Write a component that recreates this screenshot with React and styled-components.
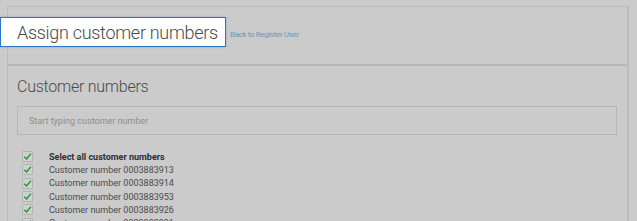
import React from "react";
import styled, { createGlobalStyle } from "styled-components";

const Global = createGlobalStyle`
    html, body {
        margin: 0;
        padding: 0;
        background: #cbcbcb;
        font-family: Roboto, "Liberation Sans", sans-serif;
        color: #454545;
        overflow: hidden;
    }
`

const Page = styled.div`
    width: 637px;
    height: 221px;
    padding: 6px 8px 0 7px;
    box-sizing: border-box;
`

const Frame = styled.div`
    border-left: 1px solid #bcbcbc;
    border-right: 2px solid #bcbcbc;
    height: 100%;
`

const Header = styled.div`
    height: 60px;
    border-top: 1px solid #bdbdbd;
    border-bottom: 2px solid #b6b6b6;
    box-sizing: border-box;
    display: flex;
    align-items: flex-start;
    padding-top: 10px;
`

const Highlight = styled.div`
    margin-left: -8px;
    width: 226px;
    height: 30px;
    box-sizing: border-box;
    background: #fff;
    border: 1px solid #2f76c8;
    box-shadow: 0 0 2px rgba(47, 118, 200, 0.4);
    display: flex;
    align-items: center;
    padding-left: 16px;
`

const Title = styled.h1`
    margin: 0;
    font-size: 18px;
    font-weight: 300;
    color: #484848;
    letter-spacing: -0.3px;
    white-space: nowrap;
`

const BackLink = styled.a`
    margin: 13px 0 0 4px;
    font-size: 8px;
    color: #6d96bb;
    letter-spacing: -0.35px;
    text-decoration: none;
    white-space: nowrap;
`

const Content = styled.div`
    padding: 11px 10px 0 9px;
`

const SectionTitle = styled.h2`
    margin: 0 0 9px;
    font-size: 16px;
    font-weight: 300;
    color: #4a4a4a;
    letter-spacing: -0.25px;
    line-height: 20px;
`

const SearchBox = styled.div`
    height: 29px;
    box-sizing: border-box;
    border: 1px solid #b6b6b6;
    display: flex;
    align-items: center;
    padding-left: 11px;
    font-size: 9px;
    color: #8d8d8d;
`

const List = styled.ul`
    list-style: none;
    margin: 15px 0 0;
    padding: 0 0 0 5px;
    display: flex;
    flex-direction: column;
`

const Item = styled.li`
    display: flex;
    align-items: center;
    height: 13.3px;
    font-size: 9px;
    font-weight: ${p => (p.$bold ? 700 : 400)};
    color: ${p => (p.$bold ? "#2f2f2f" : "#4a4a4a")};
    white-space: nowrap;
`

const Box = styled.span`
    width: 9px;
    height: 9px;
    border: 1px solid #b3b3b3;
    background: #d0d0d0;
    border-radius: 1px;
    margin-right: 16px;
    display: flex;
    align-items: center;
    justify-content: center;
    flex-shrink: 0;
`

const Check = () => (
    <Box>
        <svg width="9" height="9" viewBox="0 0 10 10">
            <path d="M1.5 5.2 L4 7.8 L8.8 1.8" fill="none" stroke="#1f9a2a" strokeWidth="1.6" />
        </svg>
    </Box>
)

const numbers = ["0003883913", "0003883914", "0003883953", "0003883926", "0003883931"]

const App = () => {
    return (
        <Page>
            <Global />
            <Frame>
                <Header>
                    <Highlight>
                        <Title>Assign customer numbers</Title>
                    </Highlight>
                    <BackLink href="#">Back to Register User</BackLink>
                </Header>
                <Content>
                    <SectionTitle>Customer numbers</SectionTitle>
                    <SearchBox>Start typing customer number</SearchBox>
                    <List>
                        <Item $bold><Check />Select all customer numbers</Item>
                        {numbers.map(n => (
                            <Item key={n}><Check />Customer number {n}</Item>
                        ))}
                    </List>
                </Content>
            </Frame>
        </Page>
    )
}

export default App;
